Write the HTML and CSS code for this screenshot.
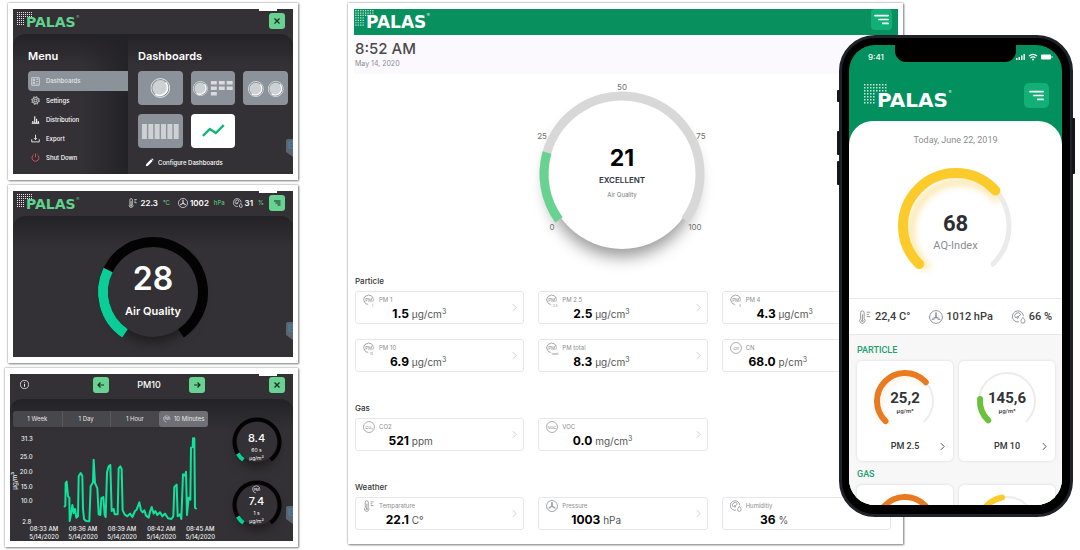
FILE: index.html
```html
<!DOCTYPE html>
<html lang="en">
<head>
<meta charset="utf-8">
<title>Palas air quality</title>
<link rel="stylesheet" href="styles.css">
</head>
<body>
<svg class="defs" aria-hidden="true">
  <defs>
    <symbol id="dots" viewBox="0 0 32 28"><path d="M0 1H32M0 5H32M0 9H32M0 13H16M0 17H16M0 21H16M0 25H16" fill="none" stroke="currentColor" stroke-width="2" stroke-dasharray="2 2"/></symbol>
    <symbol id="close" viewBox="0 0 16 16"><path d="M5.500 5.500l5 5m0-5l-5 5" stroke="currentColor" stroke-width="1.300"/></symbol>
    <symbol id="bars" viewBox="0 0 16 16"><path d="M3 5h10M6 8h7M9 11h4" stroke="currentColor" stroke-width="1.300" stroke-linecap="round"/></symbol>
    <symbol id="bars-small" viewBox="0 0 16 16"><path d="M5 6h6.500M6.500 8h5M8.500 10h3" stroke="currentColor" stroke-width="1.100"/></symbol>
    <symbol id="left" viewBox="0 0 16 16"><path d="M11 8H5m2.500-2.500L5 8l2.500 2.500" fill="none" stroke="currentColor" stroke-width="1.200"/></symbol>
    <symbol id="right" viewBox="0 0 16 16"><path d="M5 8h6M8.500 5.500L11 8l-2.500 2.500" fill="none" stroke="currentColor" stroke-width="1.200"/></symbol>
    <symbol id="chev" viewBox="0 0 6 10"><path d="M1 1l4 4-4 4" fill="none" stroke="currentColor"/></symbol>
    <symbol id="therm" viewBox="0 0 16 16"><g fill="none" stroke="currentColor"><path d="M3 10V3a2 2 0 0 1 4 0v7a3 3 0 1 1-4 0zM5 5v7M10 2.500h4M10 5h2.500M10 7.500h4"/><circle cx="5" cy="12.300" r="1"/></g></symbol>
    <symbol id="fan" viewBox="0 0 16 16"><g fill="none" stroke="currentColor"><circle cx="8" cy="8" r="7.300"/><path d="M8 8C7 6.500 7.200 4 8 2.800 8.800 4 9 6.500 8 8zM8 8.500c-1 1.700-3 2.600-4.500 2.300.8-1.300 2.700-2.300 4.500-2.300zM8 8.500c1.800 0 3.700 1 4.500 2.300-1.500.3-3.500-.6-4.500-2.300z"/></g></symbol>
    <symbol id="hum" viewBox="0 0 16 16"><g fill="none" stroke="currentColor"><path d="M8 13.500A6.300 6.300 0 1 1 13 7M4 9a3.500 3.500 0 0 1 5.500-4.500M6.500 8.500l4-4"/><circle cx="6.300" cy="8.500" r="1"/><path d="M12.500 8.500c1.500 2 2.300 3 2.300 4.300a2.300 2.300 0 0 1-4.600 0c0-1.300.8-2.300 2.300-4.300z"/></g></symbol>
    <symbol id="pm" viewBox="0 0 16 16"><path d="M7 14.500l-1.200-1-1.600-.1-.9-1.500-1.500-.9-.1-1.700-1-1.300.7-1.500V4.800l1.500-.9 1-1.500 1.700-.1L7.500 1.200l1.500.9 1.700-.1 1 1.500 1.500.9v1.700l1 1.400-.9 1.500-.1 1" fill="none" stroke="currentColor"/><text x="7.500" y="10" class="badge">PM</text></symbol>
    <symbol id="round" viewBox="0 0 16 16"><circle cx="8" cy="8" r="7.300" fill="none" stroke="currentColor" stroke-width=".9"/></symbol>
    <symbol id="dial" viewBox="0 0 20 20"><circle cx="10" cy="10" r="9.500" fill="none" stroke="#e3e5e7"/><circle cx="10" cy="10" r="8" fill="#ced1d3"/><path d="M15.500 4.500A8 8 0 0 1 5 16.300" fill="none" stroke="#fff" stroke-width="1.500"/></symbol>
    <symbol id="tag" viewBox="0 0 7 18"><path d="M2 0h5v18L0 13V2a2 2 0 0 1 2-2z" fill="#5c646d"/><path d="M7 3H3v6h4M4 6h3" fill="none" stroke="#3f87b5"/></symbol>
  </defs>
</svg>

<main class="stage">
  <div class="screens">
    <section class="frame" aria-label="Menu">
      <div class="screen">
        <header class="bar">
          <div class="logo green"><svg><use href="#dots"/></svg><b>PALAS</b><sup>®</sup></div>
          <button class="key" aria-label="Close"><svg><use href="#close"/></svg></button>
        </header>
        <i class="tab"></i>
        <div class="panel menu">
          <nav class="side">
            <h2>Menu</h2>
            <a href="#" class="on"><svg viewBox="0 0 12 12"><path d="M1 1h10v10H1zM3 3h2v2H3zM3 7h2v2H3zM7 3h2v1M7 6h2M7 9h2" fill="none" stroke="currentColor"/></svg>Dashboards</a>
            <a href="#"><svg viewBox="0 0 12 12"><circle cx="6" cy="6" r="1.800" fill="none" stroke="currentColor"/><circle cx="6" cy="6" r="4" fill="none" stroke="currentColor"/><circle cx="6" cy="6" r="5.200" fill="none" stroke="currentColor" stroke-dasharray="2 2.080"/></svg>Settings</a>
            <a href="#"><svg viewBox="0 0 12 12"><path d="M1 11h10M2.500 11V8M5 11V1.500M7.500 11V5M9.700 11V8" stroke="currentColor" stroke-width="1.400"/></svg>Distribution</a>
            <a href="#"><svg viewBox="0 0 12 12"><path d="M1 7v3.500h10V7M6 1v6.500M4 5.500l2 2 2-2" fill="none" stroke="currentColor" stroke-width="1.100"/></svg>Export</a>
            <a href="#"><svg class="red" viewBox="0 0 12 12"><path d="M3.500 2.500a4.600 4.600 0 1 0 5 0M6 .500v5" fill="none" stroke="currentColor" stroke-width="1.200"/></svg>Shut Down</a>
          </nav>
          <div class="boards">
            <h2>Dashboards</h2>
            <div class="tiles">
              <button aria-label="Gauge"><svg viewBox="0 0 45 34"><use href="#dial" x="12.500" y="7" width="20" height="20"/></svg></button>
              <button aria-label="Gauge and values"><svg viewBox="0 0 45 34"><use href="#dial" x="2" y="10" width="15" height="15"/><path d="M20 10h6v3.500h-6zM28 10h6v3.500h-6zM36 10h6v3.500h-6zM20 15.500h6V19h-6zM28 15.500h6V19h-6zM36 15.500h6V19h-6zM20 21h6v3.500h-6z" fill="#d9dbdd"/></svg></button>
              <button aria-label="Two gauges"><svg viewBox="0 0 45 34"><use href="#dial" x="5" y="10" width="16" height="16"/><use href="#dial" x="25" y="10" width="16" height="16"/></svg></button>
              <button aria-label="Columns"><svg viewBox="0 0 45 34"><path d="M4 10h5v15H4zM10.400 10h5v15h-5zM16.800 10h5v15h-5zM23.200 10h5v15h-5zM29.600 10h5v15h-5zM36 10h5v15h-5z" fill="#ced1d3"/></svg></button>
              <button class="white" aria-label="Chart"><svg viewBox="0 0 45 34"><path d="M12 22l7-7 6 4 8-8" fill="none" stroke="#12b578" stroke-width="2.400"/></svg></button>
            </div>
            <a href="#" class="conf"><svg viewBox="0 0 12 12"><path d="M1 11l.8-3L8 1.800l2.200 2.200L4 10.200z M8.600 1.200l.8-.8 2.200 2.200-.8.8z" fill="currentColor"/></svg>Configure Dashboards</a>
          </div>
        </div>
        <svg class="tag"><use href="#tag"/></svg>
      </div>
    </section>

    <section class="frame" aria-label="Air quality">
      <div class="screen">
        <header class="bar">
          <div class="logo green"><svg><use href="#dots"/></svg><b>PALAS</b><sup>®</sup></div>
          <div class="stats">
            <span><svg><use href="#therm"/></svg><b>22.3</b><em>°C</em></span>
            <span><svg><use href="#fan"/></svg><b>1002</b><em>hPa</em></span>
            <span><svg><use href="#hum"/></svg><b>31</b><em>%</em></span>
          </div>
          <button class="key" aria-label="Menu"><svg><use href="#bars-small"/></svg></button>
        </header>
        <i class="tab"></i>
        <div class="panel center">
          <div class="gauge big">
            <svg viewBox="0 0 112 112"><circle class="disc" cx="56" cy="56" r="45"/><g fill="none" stroke-width="10"><circle cx="56" cy="56" r="50" stroke="#030304" pathLength="360" stroke-dasharray="292 68" transform="rotate(124 56 56)"/><circle cx="56" cy="56" r="50" stroke="#0bcd98" pathLength="360" stroke-dasharray="82 278" transform="rotate(124 56 56)"/></g></svg>
            <div class="read"><b>28</b><span>Air Quality</span></div>
          </div>
        </div>
        <svg class="tag"><use href="#tag"/></svg>
      </div>
    </section>

    <section class="frame wide" aria-label="PM10 history">
      <div class="screen">
        <header class="bar spread">
          <svg class="info" viewBox="0 0 10 10"><circle cx="5" cy="5" r="4.500" fill="none" stroke="currentColor" stroke-width=".8"/><path d="M5 4.300v3.200M5 2.500v1" stroke="currentColor"/></svg>
          <div class="pager">
            <button class="key" aria-label="Previous"><svg><use href="#left"/></svg></button>
            <strong>PM10</strong>
            <button class="key" aria-label="Next"><svg><use href="#right"/></svg></button>
          </div>
          <button class="key" aria-label="Close"><svg><use href="#close"/></svg></button>
        </header>
        <i class="tab"></i>
        <div class="panel history">
          <div>
            <div class="range">
              <button>1 Week</button><button>1 Day</button><button>1 Hour</button><button class="on"><svg><use href="#pm"/></svg>10 Minutes</button>
            </div>
            <svg class="chart" viewBox="30 206 630 328">
              <g class="axis">
                <text x="98" y="235" text-anchor="end">31.3</text><text x="98" y="290" text-anchor="end">25.0</text><text x="98" y="335" text-anchor="end">20.0</text><text x="98" y="379" text-anchor="end">15.0</text><text x="98" y="423" text-anchor="end">10.0</text><text x="94" y="486" text-anchor="end">2.8</text>
                <text transform="translate(51 382) rotate(-90)">µg/m³</text>
                <g text-anchor="middle">
                  <text x="132" y="507">08:33 AM</text><text x="132" y="531">5/14/2020</text>
                  <text x="249" y="507">08:36 AM</text><text x="249" y="531">5/14/2020</text>
                  <text x="366" y="507">08:39 AM</text><text x="366" y="531">5/14/2020</text>
                  <text x="484" y="507">08:42 AM</text><text x="484" y="531">5/14/2020</text>
                  <text x="601" y="507">08:45 AM</text><text x="601" y="531">5/14/2020</text>
                </g>
              </g>
              <polyline fill="none" stroke="#0fe39b" stroke-width="6" stroke-linejoin="round" points="192,434 196,430 197,362 200,358 204,402 208,406 209,476 214,450 217,428 221,452 225,440 229,466 234,462 236,342 242,332 247,340 249,440 252,470 258,476 268,477 272,372 279,360 281,292 285,362 292,378 296,456 301,458 304,408 310,404 314,458 317,464 321,330 326,312 331,308 335,446 341,440 344,456 353,456 356,318 361,312 365,320 368,444 374,456 382,462 390,454 397,464 405,446 410,442 418,420 423,444 428,450 433,444 438,460 446,466 450,448 455,434 461,454 466,446 472,458 480,450 487,462 495,454 504,468 514,470 520,462 523,374 530,367 533,462 540,456 544,470 549,336 555,340 558,328 561,458 566,406 571,412 573,256 578,254 579,228 583,228 585,436 590,440"/>
            </svg>
          </div>
          <div class="minis">
            <div class="gauge mini">
              <svg viewBox="0 0 50 50"><circle class="disc" cx="25" cy="25" r="20"/><g fill="none" stroke-width="4"><circle cx="25" cy="25" r="22.500" stroke="#030304" pathLength="360" stroke-dasharray="286 74" transform="rotate(127 25 25)"/><circle cx="25" cy="25" r="22.500" stroke="#0bcd98" pathLength="360" stroke-dasharray="22 338" transform="rotate(127 25 25)"/></g></svg>
              <div class="read"><b>8.4</b><span>60 s</span><span>µg/m³</span></div>
            </div>
            <div class="gauge mini">
              <svg viewBox="0 0 50 50"><circle class="disc" cx="25" cy="25" r="20"/><g fill="none" stroke-width="4"><circle cx="25" cy="25" r="22.500" stroke="#030304" pathLength="360" stroke-dasharray="286 74" transform="rotate(127 25 25)"/><circle cx="25" cy="25" r="22.500" stroke="#0bcd98" pathLength="360" stroke-dasharray="22 338" transform="rotate(127 25 25)"/></g></svg>
              <div class="read"><svg class="ico"><use href="#pm"/></svg><b>7.4</b><span>1 s</span><span>µg/m³</span></div>
            </div>
          </div>
        </div>
        <svg class="tag"><use href="#tag"/></svg>
      </div>
    </section>
  </div>

  <section class="tablet" aria-label="Overview">
    <header class="top">
      <div class="logo mid"><svg><use href="#dots"/></svg><b>PALAS</b><sup>®</sup></div>
      <button class="key flat" aria-label="Menu"><svg><use href="#bars"/></svg></button>
    </header>
    <div class="clock"><time>8:52 AM</time><span>May 14, 2020</span></div>
    <div class="dial-row">
    <div class="gauge main">
      <svg viewBox="0 0 190 190">
        <circle class="lift" cx="95" cy="93" r="75"/>
        <g fill="none" stroke-width="9"><circle cx="95" cy="93" r="78" stroke="#d8d8d8" pathLength="360" stroke-dasharray="252 108" transform="rotate(144 95 93)"/><circle cx="95" cy="93" r="78" stroke="#68d391" pathLength="360" stroke-dasharray="52 308" transform="rotate(144 95 93)"/></g>
        <g class="ticks"><text x="95" y="9">50</text><text x="15" y="58">25</text><text x="174" y="58">75</text><text x="25" y="149">0</text><text x="168" y="149">100</text></g>
      </svg>
      <div class="read"><b>21</b><strong>EXCELLENT</strong><span>Air Quality</span></div>
    </div>
    </div>
    <div class="groups">
      <section>
        <h3>Particle</h3>
        <div class="cards">
          <a class="card" href="#"><svg class="ico"><use href="#pm"/><text x="9" y="13" class="sub">1</text></svg><span>PM 1</span><p><b>1.5</b> µg/cm<sup>3</sup></p><svg class="go"><use href="#chev"/></svg></a>
          <a class="card" href="#"><svg class="ico"><use href="#pm"/><text x="7" y="13" class="sub">2.5</text></svg><span>PM 2.5</span><p><b>2.5</b> µg/cm<sup>3</sup></p><svg class="go"><use href="#chev"/></svg></a>
          <a class="card" href="#"><svg class="ico"><use href="#pm"/><text x="9" y="13" class="sub">4</text></svg><span>PM 4</span><p><b>4.3</b> µg/cm<sup>3</sup></p><svg class="go"><use href="#chev"/></svg></a>
          <a class="card" href="#"><svg class="ico"><use href="#pm"/><text x="7" y="13" class="sub">10</text></svg><span>PM 10</span><p><b>6.9</b> µg/cm<sup>3</sup></p><svg class="go"><use href="#chev"/></svg></a>
          <a class="card" href="#"><svg class="ico"><use href="#pm"/><text x="6" y="13" class="sub">total</text></svg><span>PM total</span><p><b>8.3</b> µg/cm<sup>3</sup></p><svg class="go"><use href="#chev"/></svg></a>
          <a class="card" href="#"><svg class="ico"><use href="#round"/><text x="6" y="8" class="mark">Cn</text></svg><span>CN</span><p><b>68.0</b> p/cm<sup>3</sup></p><svg class="go"><use href="#chev"/></svg></a>
        </div>
      </section>
      <section>
        <h3>Gas</h3>
        <div class="cards">
          <a class="card" href="#"><svg class="ico"><use href="#round"/><text x="6" y="8" class="mark">CO₂</text></svg><span>CO2</span><p><b>521</b> ppm</p><svg class="go"><use href="#chev"/></svg></a>
          <a class="card" href="#"><svg class="ico"><use href="#round"/><text x="6" y="8" class="mark">VOC</text></svg><span>VOC</span><p><b>0.0</b> mg/cm<sup>3</sup></p><svg class="go"><use href="#chev"/></svg></a>
        </div>
      </section>
      <section>
        <h3>Weather</h3>
        <div class="cards">
          <a class="card" href="#"><svg class="ico"><use href="#therm"/></svg><span>Temparature</span><p><b>22.1</b> C°</p><svg class="go"><use href="#chev"/></svg></a>
          <a class="card" href="#"><svg class="ico"><use href="#fan"/></svg><span>Pressure</span><p><b class="long">1003</b> hPa</p><svg class="go"><use href="#chev"/></svg></a>
          <a class="card" href="#"><svg class="ico"><use href="#hum"/></svg><span>Humiditiy</span><p><b>36</b> %</p><svg class="go"><use href="#chev"/></svg></a>
        </div>
      </section>
    </div>
  </section>

  <section class="phone" aria-label="Mobile">
    <i class="side-key mute"></i><i class="side-key up"></i><i class="side-key down"></i><i class="side-key power"></i>
    <div class="glass">
      <div class="status">
        <span>9:41</span><i class="notch"></i>
        <svg viewBox="0 0 37 8"><path d="M0 5h1.500v2H0zM2.500 4H4v3H2.500zM5 2.500h1.500V7H5zM7.500 1H9v6H7.500z" fill="#fff"/><path d="M13 3.200a5.500 5.500 0 0 1 8 0M14.600 5a3.300 3.300 0 0 1 4.800 0" fill="none" stroke="#fff" stroke-width="1.200"/><circle cx="17" cy="6.600" r="1" fill="#fff"/><rect x="25" y="1.500" width="10" height="5" rx="1" fill="#fff"/><path d="M36 3.200v1.600" stroke="#fff"/></svg>
      </div>
      <header class="head">
        <div class="logo large"><svg><use href="#dots"/></svg><b>PALAS</b><sup>®</sup></div>
        <button class="key flat large" aria-label="Menu"><svg><use href="#bars"/></svg></button>
      </header>
      <div class="sheet">
        <p class="day">Today, June 22, 2019</p>
        <div class="gauge aq">
          <svg viewBox="0 0 122 122"><g fill="none" stroke-linecap="round"><circle cx="61" cy="61" r="53" stroke="#ebebeb" stroke-width="5" pathLength="360" stroke-dasharray="272 88" transform="rotate(134 61 61)"/><circle class="glow" cx="65" cy="66" r="49" stroke="#fbe9b4" stroke-width="8" pathLength="360" stroke-dasharray="184 176" transform="rotate(134 65 66)"/><circle cx="61" cy="61" r="53" stroke="#fbcb2c" stroke-width="10" pathLength="360" stroke-dasharray="184 176" transform="rotate(134 61 61)"/></g></svg>
          <div class="read"><b>68</b><span>AQ-Index</span></div>
        </div>
        <div class="weather">
          <span><svg><use href="#therm"/></svg>22,4 C°</span><span><svg><use href="#fan"/></svg>1012 hPa</span><span><svg><use href="#hum"/></svg>66 %</span>
        </div>
        <div class="list">
          <h3>PARTICLE</h3>
          <div class="pair">
            <a class="tile" href="#"><div class="gauge pm">
              <svg viewBox="0 0 66 66"><g fill="none" stroke-linecap="round"><circle cx="33" cy="33" r="28" stroke="#ececec" stroke-width="2" pathLength="360" stroke-dasharray="272 88" transform="rotate(134 33 33)"/><circle class="glow" cx="35" cy="36" r="27" stroke="#fdeedd" stroke-width="4" pathLength="360" stroke-dasharray="180 180" transform="rotate(134 35 36)"/><circle cx="33" cy="33" r="28" stroke="#ea7a20" stroke-width="6" pathLength="360" stroke-dasharray="184 176" transform="rotate(134 33 33)"/></g></svg>
              <div class="read"><b>25,2</b><span>µg/m³</span></div></div>
              <div class="foot"><span>PM 2.5</span><svg><use href="#chev"/></svg></div></a>
            <a class="tile" href="#"><div class="gauge pm">
              <svg viewBox="0 0 66 66"><g fill="none" stroke-linecap="round"><circle cx="33" cy="33" r="28" stroke="#ececec" stroke-width="2" pathLength="360" stroke-dasharray="272 88" transform="rotate(134 33 33)"/><circle cx="33" cy="33" r="27" stroke="#6ac23b" stroke-width="6" pathLength="360" stroke-dasharray="50 310" transform="rotate(134 33 33)"/></g></svg>
              <div class="read"><b>145,6</b><span>µg/m³</span></div></div>
              <div class="foot"><span>PM 10</span><svg><use href="#chev"/></svg></div></a>
          </div>
          <h3>GAS</h3>
          <div class="pair">
            <a class="tile" href="#" aria-label="Gas 1"><div class="gauge pm"><svg viewBox="0 0 66 66"><g fill="none" stroke-linecap="round"><circle cx="33" cy="33" r="28" stroke="#ea7a20" stroke-width="6" pathLength="360" stroke-dasharray="184 176" transform="rotate(134 33 33)"/></g></svg></div></a>
            <a class="tile" href="#" aria-label="Gas 2"><div class="gauge pm"><svg viewBox="0 0 66 66"><g fill="none" stroke-linecap="round"><circle cx="33" cy="33" r="28" stroke="#ececec" stroke-width="2"/><circle cx="33" cy="33" r="28" stroke="#fbcb2c" stroke-width="6" pathLength="360" stroke-dasharray="126 234" transform="rotate(134 33 33)"/></g></svg></div></a>
          </div>
        </div>
      </div>
    </div>
  </section>
</main>
</body>
</html>
```
FILE: styles.css
```css
* { box-sizing: border-box; }
body { margin: 0; background: #fff; font-family: Inter, "Open Sans", sans-serif; font-size: 8px; line-height: 1.25; color: #333; }
h2, h3, p { margin: 0; }
a { color: inherit; text-decoration: none; }
button { font: inherit; color: inherit; border: 0; padding: 0; background: none; }
svg { display: block; }
.defs { position: absolute; width: 0; height: 0; }
.badge { font-size: 6px; text-anchor: middle; fill: currentColor; }

.stage { position: relative; display: grid; grid-template-columns: minmax(0, 293fr) minmax(0, 555fr); column-gap: 50px; padding: 3px 177px 5px 5px; align-items: start; }

/* device frames */
.screens { display: grid; gap: 5px; }
.frame { margin-left: 3px; padding: 6px 5px; background: #fff; box-shadow: 0 0 2px #8a8a8a, 1px 1px 2px #8a8a8a; }
.frame.wide { margin-left: 0; }
.screen { position: relative; display: flex; flex-direction: column; aspect-ratio: 281 / 166; background: #333135; color: #fff; overflow: hidden; }
.bar { display: flex; align-items: center; justify-content: space-between; height: 25px; flex: none; padding: 0 8px 4px 4px; }
.bar .key { margin-top: 2px; }
.panel { flex: 1; min-height: 0; border-radius: 12px 12px 0 0; background: linear-gradient(#232226, #333135 32px); }
.tab { position: absolute; top: 0; right: 16px; width: 18px; height: 2px; background: #fff; }
.tag { position: absolute; right: 0; bottom: 17px; width: 7px; height: 18px; }

.key { display: grid; place-items: center; flex: none; width: 16px; height: 16px; border-radius: 3px; background: #68d391; color: #1d2b24; }
.key svg { width: 16px; height: 16px; }
.key.flat { width: 21px; height: 21px; border-radius: 4px; background: #12b076; color: #fff; }
.key.flat svg { width: 21px; height: 21px; }
.key.flat.large { width: 25px; height: 25px; border-radius: 5px; }

.logo { display: flex; align-items: flex-end; color: #fff; font-family: "DejaVu Sans", sans-serif; }
.logo svg { width: 16px; height: 14px; margin-bottom: 2px; color: #e8e8ea; }
.logo b { margin-left: -7px; font-size: 14px; line-height: 12px; font-weight: 700; }
.logo sup { align-self: flex-start; margin-top: 3px; font-size: 4px; line-height: 4px; }
.logo.green b, .logo.green sup { color: #5fd28c; }
.logo.mid svg { width: 20px; height: 17px; color: #c8ebdc; }
.logo.mid b { margin-left: -9px; font-size: 17px; line-height: 14px; }
.logo.large svg { width: 24px; height: 21px; color: #c8ebdc; }
.logo.large b { margin-left: -11px; font-size: 20px; line-height: 14px; }
.logo.large sup { margin-top: 6px; }

/* menu screen */
.menu { display: grid; grid-template-columns: 115fr 165fr; }
.menu h2 { font-size: 11px; line-height: 14px; font-weight: 600; }
.side { padding: 15px 0 0 15px; background: linear-gradient(to right, transparent 60%, #232226); border-radius: 12px 0 0 0; }
.side h2 { margin-bottom: 8px; }
.side a { display: flex; align-items: center; gap: 6px; height: 19px; padding-left: 3px; font-size: 6px; font-weight: 500; }
.side a svg { width: 9px; height: 9px; }
.side .on { height: 20px; background: #8b9299; border-radius: 4px 0 0 4px; color: #e4e6e8; }
.red { color: #e0505e; }
.boards { padding: 15px 5px 0 10px; }
.tiles { display: grid; grid-template-columns: repeat(3, 1fr); gap: 9px 8px; margin-top: 8px; }
.tiles button { height: 34px; border-radius: 4px; background: #8b9299; overflow: hidden; }
.tiles .white { background: #fff; }
.tiles svg { width: 100%; height: 100%; }
.conf { display: flex; align-items: center; gap: 4px; margin: 10px 0 0 7px; font-size: 6px; font-weight: 500; }
.conf svg { width: 9px; height: 9px; }

/* gauges */
.gauge { display: grid; }
.gauge > * { grid-area: 1 / 1; }
.gauge > svg { width: 100%; height: 100%; overflow: visible; }
.read { display: flex; flex-direction: column; align-items: center; }
.disc { fill: #333135; filter: drop-shadow(0 5px 6px #1c1b1e); }
.center { display: grid; justify-items: center; align-items: start; padding-top: 20px; }
.big { width: 112px; height: 112px; }
.big .read { padding-top: 24px; }
.big b { font-size: 32px; line-height: 38px; font-weight: 600; }
.big span { font-size: 11px; line-height: 26px; font-weight: 600; }
.stats { display: flex; gap: 8px; flex: 1; justify-content: flex-end; margin: 2px 5px 0 0; }
.stats span { display: flex; align-items: center; gap: 2px; font-size: 8px; }
.stats svg { width: 10px; height: 10px; }
.stats b { font-weight: 600; font-size: 8px; }
.stats em { margin-left: 3px; font-style: normal; font-size: 6px; color: #5fd28c; }

/* history screen */
.spread { padding-left: 10px; }
.info { width: 9px; height: 9px; }
.pager { display: flex; align-items: center; justify-content: space-between; width: 112px; }
.pager strong { font-size: 9px; font-weight: 500; }
.history { display: grid; grid-template-columns: 210fr 73fr; padding-top: 12px; }
.range { display: grid; grid-template-columns: repeat(4, 1fr); margin: 0 12px 4px 3px; height: 16px; border-radius: 3px; background: #48474b; font-size: 6px; }
.range button { display: flex; align-items: center; justify-content: center; gap: 3px; white-space: nowrap; color: #e6e6e6; }
.range button:nth-child(2) { border-left: 1px solid #59585c; border-right: 1px solid #59585c; }
.range .on { border-radius: 3px; background: #6f7075; }
.range svg { width: 8px; height: 8px; }
.chart { width: 100%; }
.axis { fill: #f1f1f1; font-size: 18px; font-weight: 500; }
.minis { display: grid; gap: 13px; justify-content: center; align-content: start; padding-top: 6px; }
.mini { width: 50px; height: 50px; }
.mini .read { justify-content: flex-end; padding-bottom: 5px; font-size: 5px; line-height: 8px; }
.mini b { font-size: 11px; line-height: 15px; font-weight: 500; }
.mini .ico { width: 9px; height: 9px; }

/* tablet */
.tablet { padding: 6px 5px 14px 6px; background: #fff; box-shadow: 0 0 2px #8a8a8a, 1px 1px 2px #8a8a8a; }
.top { display: flex; justify-content: space-between; align-items: flex-start; height: 26px; padding: 0 6px 0 1px; background: #09905f; }
.top .logo { padding-top: 1px; }
.clock { display: grid; align-content: start; height: 39px; padding: 4px 1px; background: #fbf9fd; }
.clock time { font-size: 15px; line-height: 20px; font-weight: 500; color: #4a4a4c; }
.clock span { font-size: 7px; line-height: 9px; color: #8c8c90; }
.dial-row { display: grid; justify-content: center; padding: 7px 8px 0 0; }
.main { width: 190px; height: 190px; }
.lift { fill: #fff; filter: drop-shadow(0 8px 8px #0006); }
.ticks { font-size: 8px; text-anchor: middle; fill: #707070; }
.main .read { padding-top: 62px; }
.main b { font-size: 23px; line-height: 30px; color: #000; }
.main strong { font-size: 8px; line-height: 14px; font-weight: 600; color: #2d3540; }
.main span { font-size: 6px; line-height: 16px; color: #777; }
.groups { display: grid; gap: 31px; padding: 5px 7px 0 1px; }
.groups h3 { margin-bottom: 4px; font-size: 8px; line-height: 11px; font-weight: 500; color: #333; }
.cards { display: grid; grid-template-columns: repeat(3, minmax(0, 1fr)); gap: 15px 14px; }
.card { display: grid; grid-template-columns: 12px 1fr 5px; column-gap: 4px; align-items: center; height: 33px; padding: 2px 6px 2px 7px; border: 1px solid #e6e7e9; border-radius: 3px; }
.card .ico { width: 12px; height: 12px; color: #85888c; }
.card span { font-size: 6px; line-height: 12px; color: #8a8d92; }
.card p { grid-column: 1 / 3; grid-row: 2; font-size: 10px; line-height: 14px; color: #555; }
.card b { display: inline-block; min-width: 46px; text-align: right; font-size: 12px; color: #000; }
.card .long { min-width: 54px; }
.card sup { font-size: 7px; line-height: 0; }
.card .go { grid-column: 3; grid-row: 1 / 3; width: 5px; height: 9px; color: #c4c6c9; }
.sub { font-size: 3px; fill: #777; }
.mark { font-size: 4px; text-anchor: middle; fill: #777; }
.ico { overflow: visible; }

/* phone */
.phone { position: absolute; top: 35px; right: 7px; width: 234px; height: 482px; padding: 7px 8px 9px 7px; border: 3px solid #20222a; border-radius: 36px; background: #000; font-family: Roboto, sans-serif; }
.side-key { position: absolute; left: -5px; width: 3px; background: #15161b; border-radius: 1px; }
.mute { top: 52px; height: 12px; }
.up { top: 93px; height: 24px; }
.down { top: 123px; height: 24px; }
.power { left: auto; right: -5px; top: 80px; height: 56px; }
.glass { display: flex; flex-direction: column; height: 100%; border-radius: 26px; overflow: hidden; background: #02905e; }
.status { display: grid; grid-template-columns: 46px 1fr 46px; flex: none; height: 24px; color: #fff; }
.status span { align-self: center; padding-left: 19px; font: 500 8px Inter, sans-serif; }
.notch { height: 17px; border-radius: 0 0 11px 11px; background: #000; }
.status svg { align-self: center; width: 37px; height: 8px; }
.head { display: flex; flex: none; justify-content: space-between; align-items: center; height: 52px; padding: 1px 13px 0 15px; }
.sheet { display: flex; flex-direction: column; flex: 1; min-height: 0; border-radius: 24px 24px 0 0; background: #fff; }
.day { padding-top: 12px; text-align: center; font-size: 9px; line-height: 14px; color: #8a8d90; }
.aq { flex: none; width: 122px; height: 122px; margin: 18px auto 0; }
.glow { filter: blur(3px); }
.aq .read { padding-top: 47px; }
.aq b { font-size: 22px; line-height: 24px; color: #2d2e31; }
.aq span { font-size: 11px; line-height: 20px; color: #8a8d92; }
.weather { display: flex; flex: none; justify-content: space-between; align-items: center; height: 37px; margin-top: 11px; padding: 0 10px 0 9px; border: solid #e8e8e8; border-width: 1px 0; font-size: 11px; font-weight: 500; color: #3a3b3e; }
.weather span { display: flex; align-items: center; gap: 3px; }
.weather svg { width: 14px; height: 14px; color: #85888c; }
.list { flex: 1; min-height: 0; padding: 8px 7px 0 8px; background: #f7f7f7; }
.list h3 { font-size: 9px; line-height: 14px; font-weight: 500; color: #20a070; }
.pair { display: grid; grid-template-columns: 1fr 1fr; gap: 6px; margin: 4px 0 6px; }
.tile { height: 100px; padding-top: 7px; border-radius: 5px; background: #fff; box-shadow: 0 0 3px #0002; }
.pm { width: 66px; height: 66px; margin: 0 auto; }
.pm .read { padding-top: 22px; }
.pm b { font-size: 15px; line-height: 16px; font-weight: 700; color: #333437; }
.pm span { font-size: 6px; line-height: 9px; font-weight: 500; }
.foot { display: grid; grid-template-columns: 1fr 5px; align-items: center; padding: 6px 8px 0 13px; font-size: 9px; line-height: 12px; font-weight: 500; text-align: center; }
.foot svg { width: 5px; height: 9px; }
```
